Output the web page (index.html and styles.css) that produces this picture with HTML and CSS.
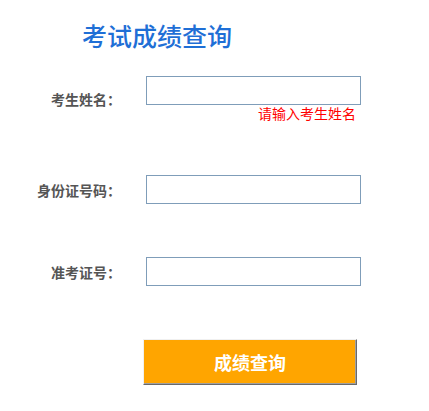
FILE: index.html
```html
<!DOCTYPE html>
<html lang="zh-CN">
<head>
<meta charset="utf-8">
<title>考试成绩查询</title>
<link rel="stylesheet" href="styles.css">
</head>
<body>
<div class="page">
  <h1 class="title">考试成绩查询</h1>
  <form class="form">
    <div class="row">
      <label class="label">考生姓名：</label>
      <div class="field">
        <input class="input" type="text">
        <div class="hint">请输入考生姓名</div>
      </div>
    </div>
    <div class="row">
      <label class="label">身份证号码：</label>
      <div class="field">
        <input class="input" type="text">
      </div>
    </div>
    <div class="row">
      <label class="label">准考证号：</label>
      <div class="field">
        <input class="input" type="text">
      </div>
    </div>
    <div class="row">
      <span class="label"></span>
      <div class="field">
        <button class="submit" type="button">成绩查询</button>
      </div>
    </div>
  </form>
</div>
</body>
</html>
```
FILE: styles.css
```css
html, body {
  margin: 0;
  padding: 0;
  background: #ffffff;
}
body {
  font-family: "Noto Sans CJK SC", "Liberation Sans", sans-serif;
}
.page {
  padding-top: 20px;
}
.title {
  margin: 0 0 26px 0;
  padding-left: 82px;
  font-size: 25px;
  line-height: 30px;
  font-weight: 500;
  color: #1f6fd6;
}
.form {
  display: flex;
  flex-direction: column;
  gap: 53px;
}
.row {
  display: grid;
  grid-template-columns: 121px 215px;
  column-gap: 25px;
  align-items: center;
}
.label {
  text-align: right;
  font-size: 14px;
  font-weight: bold;
  color: #555555;
  line-height: 20px;
}
.field {
  display: flex;
  flex-direction: column;
  align-items: flex-end;
}
.input {
  box-sizing: border-box;
  width: 215px;
  height: 29px;
  margin: 0;
  border: 1px solid #7f9db9;
  background: #ffffff;
  outline: none;
}
.hint {
  height: 17px;
  line-height: 17px;
  padding-right: 5px;
  font-size: 14px;
  color: #ff0000;
}
.submit {
  box-sizing: border-box;
  align-self: flex-start;
  margin-left: -3px;
  width: 214px;
  height: 46px;
  background: #ffa500;
  color: #ffffff;
  font-family: "Noto Sans CJK SC", "Liberation Sans", sans-serif;
  font-size: 18px;
  font-weight: bold;
  border-top: 1px solid #f0f0f0;
  border-left: 1px solid #f0f0f0;
  border-right: 1px solid #696969;
  border-bottom: 1px solid #696969;
  box-shadow: inset -1px -1px 0 #a0a0a0;
  padding: 0;
  cursor: pointer;
}
```
